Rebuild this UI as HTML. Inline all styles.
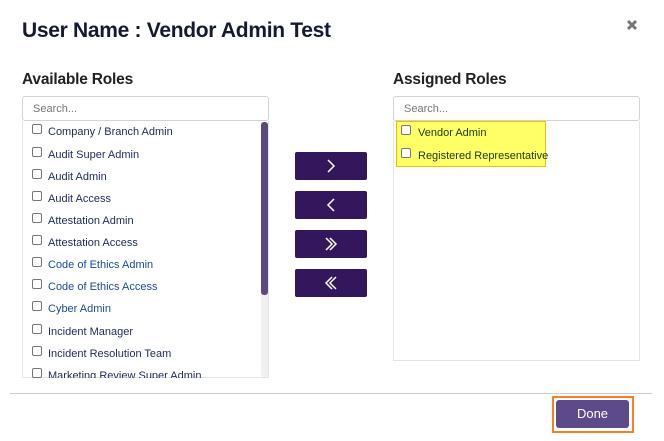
<!DOCTYPE html>
<html><head><style>
*{box-sizing:border-box;margin:0;padding:0}
body{width:664px;height:441px;background:#fff;position:relative;overflow:hidden;font-family:"Liberation Sans",sans-serif;color:#1b1f3b}
.a{position:absolute}
h1{position:absolute;left:22px;top:19px;font-size:21px;font-weight:bold;color:#141a33;letter-spacing:-0.3px}
h2{position:absolute;font-size:15.5px;font-weight:bold;color:#222;top:71px;letter-spacing:-0.2px}
.search{position:absolute;height:25px;border:1px solid #ced4da;border-radius:3px;font-size:11px;color:#777;padding:6px 10px}
.list{position:absolute;border:1px solid #e4e4e4;border-top:none}
.it{position:absolute;font-size:11px;color:#1d2a5a;white-space:nowrap}
.cb{position:absolute;width:10px;height:10px;border:1px solid #777;border-radius:2px;background:#fff}
.btn{position:absolute;left:295px;width:72px;height:28px;background:#33165c;border-radius:2px}
</style></head><body>
<h1>User Name : Vendor Admin Test</h1>
<svg class="a" style="left:626px;top:19px" width="12" height="12" viewBox="0 0 12 12"><path d="M2 2L10 10M10 2L2 10" stroke="#777" stroke-width="3"/></svg>
<h2 style="left:22px">Available Roles</h2>
<h2 style="left:393px">Assigned Roles</h2>
<div class="search" style="left:22px;top:96px;width:247px">Search...</div>
<div class="list" style="left:22px;top:121px;width:247px;height:257px;overflow:hidden">
<div class="a" style="left:238px;top:1px;width:7px;height:255px;background:#f0f0f0;border-radius:3px"></div>
<div class="a" style="left:238px;top:1px;width:7px;height:173px;background:#5c4a7e;border-radius:3px"></div>
</div>
<div id="L"></div>
<div class="search" style="left:393px;top:96px;width:247px">Search...</div>
<div class="list" style="left:393px;top:121px;width:247px;height:240px"></div>
<div class="a" style="left:396px;top:121px;width:150px;height:46px;background:#ffff66;border:1px solid #f0c000"></div>
<div class="cb" style="left:401px;top:125px"></div><div class="it" style="left:418px;top:127px;color:#1a3a1a">Vendor Admin</div>
<div class="cb" style="left:401px;top:148px"></div><div class="it" style="left:418px;top:150px;color:#1a3a1a">Registered Representative</div>
<div class="btn" style="top:152px"><svg width="72" height="28"><path d="M33 8L39 14L33 20" stroke="#fff" stroke-width="1.5" fill="none"/></svg></div>
<div class="btn" style="top:191px"><svg width="72" height="28"><path d="M39 8L33 14L39 20" stroke="#fff" stroke-width="1.5" fill="none"/></svg></div>
<div class="btn" style="top:230px"><svg width="72" height="28"><path d="M31 8L37 14L31 20M35 8L41 14L35 20" stroke="#fff" stroke-width="1.5" fill="none"/></svg></div>
<div class="btn" style="top:269px"><svg width="72" height="28"><path d="M37 8L31 14L37 20M41 8L35 14L41 20" stroke="#fff" stroke-width="1.5" fill="none"/></svg></div>
<div class="a" style="left:10px;top:393px;width:642px;height:1px;background:#ccc"></div>
<div class="a" style="left:552px;top:396px;width:82px;height:37px;border:2px solid #f58025"></div>
<div class="a" style="left:556px;top:400px;width:73px;height:28px;background:#5c4a8a;border-radius:3px;color:#fff;font-size:13px;text-align:center;line-height:28px">Done</div>
<script>
var t=[["Company / Branch Admin",131],["Audit Super Admin",154],["Audit Admin",176],["Audit Access",198],["Attestation Admin",220],["Attestation Access",242],["Code of Ethics Admin",264,1],["Code of Ethics Access",286,1],["Cyber Admin",308,1],["Incident Manager",331],["Incident Resolution Team",353],["Marketing Review Super Admin",375]];
var h="";t.forEach(function(r){var c=r[2]?"#1a4a9a":"#1d2a5a";var y=r[1]-7;
h+='<div style="position:absolute;left:23px;top:'+(y-2)+'px;width:237px;height:'+(378-y+2>20?20:378-y+2)+'px;overflow:hidden"><div class="cb" style="left:9px;top:2px"></div><div class="it" style="left:25px;top:4px;color:'+c+'">'+r[0]+'</div></div>';});
document.getElementById("L").innerHTML=h;
</script>
</body></html>
